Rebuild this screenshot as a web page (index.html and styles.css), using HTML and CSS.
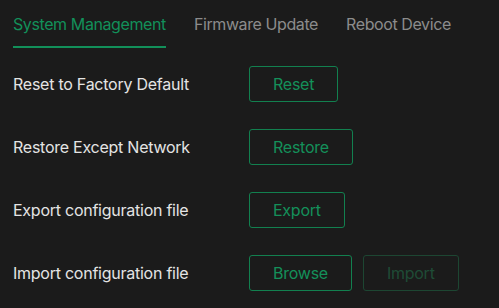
FILE: index.html
```html
<!DOCTYPE html>
<html>
<head>
<meta charset="utf-8">
<link rel="stylesheet" href="styles.css">
</head>
<body>
<div class="page">
  <nav class="tabs">
    <div class="tab active">System Management</div>
    <div class="tab">Firmware Update</div>
    <div class="tab">Reboot Device</div>
  </nav>
  <div class="rows">
    <div class="row">
      <div class="label">Reset to Factory Default</div>
      <div class="actions"><button class="btn">Reset</button></div>
    </div>
    <div class="row">
      <div class="label">Restore Except Network</div>
      <div class="actions"><button class="btn">Restore</button></div>
    </div>
    <div class="row">
      <div class="label">Export configuration file</div>
      <div class="actions"><button class="btn">Export</button></div>
    </div>
    <div class="row">
      <div class="label">Import configuration file</div>
      <div class="actions"><button class="btn">Browse</button><button class="btn disabled" disabled>Import</button></div>
    </div>
  </div>
</div>
</body>
</html>
```
FILE: styles.css
```css
html, body {
  margin: 0;
  padding: 0;
  background: #1b1b1b;
  height: 100%;
}
body {
  font-family: Inter, "Noto Sans", sans-serif;
  font-size: 16px;
  color: #e4e4e4;
}
.page {
  padding: 0 13px;
}
.tabs {
  display: flex;
  gap: 28px;
  height: 48px;
}
.tab {
  color: #8c8c8c;
  font-size: 16px;
  line-height: 16px;
  padding-top: 16px;
  box-sizing: border-box;
  height: 48px;
  letter-spacing: -0.4px;
}
.tab.active {
  color: #12905a;
  border-bottom: 2px solid #12905a;
}
.rows {
  display: flex;
  flex-direction: column;
  gap: 27px;
  padding-top: 18px;
}
.row {
  display: flex;
  align-items: center;
  height: 36px;
}
.label {
  width: 236px;
  letter-spacing: -0.25px;
}
.actions {
  display: flex;
  gap: 11px;
}
.btn {
  font-family: inherit;
  font-size: 16px;
  height: 36px;
  padding: 0 23px;
  background: transparent;
  color: #14905a;
  border: 1px solid #12804f;
  border-radius: 3px;
  letter-spacing: -0.25px;
}
.btn.disabled {
  color: #1f4c36;
  border-color: #1d4632;
}
```
